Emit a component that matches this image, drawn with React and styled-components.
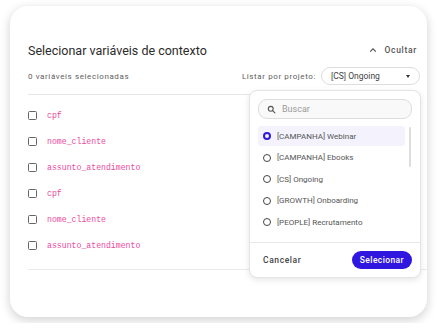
import styled, { createGlobalStyle } from "styled-components";

const GlobalStyle = createGlobalStyle`
  html, body {
    margin: 0;
    padding: 0;
    background: #ffffff;
    font-family: Roboto, "Noto Sans", sans-serif;
  }
`;

const variables = [
  "cpf",
  "nome_cliente",
  "assunto_atendimento",
  "cpf",
  "nome_cliente",
  "assunto_atendimento",
];

const projects = [
  "[CAMPANHA] Webinar",
  "[CAMPANHA] Ebooks",
  "[CS] Ongoing",
  "[GROWTH] Onboarding",
  "[PEOPLE] Recrutamento",
];

const SearchIcon = () => (
  <svg width="9" height="9" viewBox="0 0 24 24" fill="none" stroke="#555" strokeWidth="3" strokeLinecap="round">
    <circle cx="10" cy="10" r="6.5" />
    <line x1="15" y1="15" x2="21" y2="21" />
  </svg>
);

const ChevronUp = () => (
  <svg width="8" height="6" viewBox="0 0 10 6" fill="none" stroke="#555" strokeWidth="1.5">
    <polyline points="1.5,5 5,1.5 8.5,5" />
  </svg>
);

const App = () => {
  return (
    <>
      <GlobalStyle />
      <Page>
        <Card>
          <Header>
            <Title>Selecionar variáveis de contexto</Title>
            <HideButton>
              <ChevronUp />
              Ocultar
            </HideButton>
          </Header>
          <SubRow>
            <Muted>0 variáveis selecionadas</Muted>
            <Filter>
              <Muted>Listar por projeto:</Muted>
              <Select>
                [CS] Ongoing
                <Caret />
              </Select>
            </Filter>
          </SubRow>
          <List>
            {variables.map((v, i) => (
              <Row key={i}>
                <Checkbox />
                <VarName>{v}</VarName>
              </Row>
            ))}
          </List>

          <Popover>
            <Search>
              <SearchIcon />
              <span>Buscar</span>
            </Search>
            <Options>
              {projects.map((p, i) => (
                <Option key={p} active={i === 0}>
                  <Radio active={i === 0} />
                  {p}
                </Option>
              ))}
              <Scrollbar />
            </Options>
            <Footer>
              <CancelButton>Cancelar</CancelButton>
              <PrimaryButton>Selecionar</PrimaryButton>
            </Footer>
          </Popover>
        </Card>
      </Page>
    </>
  );
};

export default App;

const Page = styled.div({
  padding: `6px 10px`,
});

const Card = styled.div({
  position: `relative`,
  width: `417px`,
  height: `311px`,
  boxSizing: `border-box`,
  padding: `36px 7px 0 18px`,
  background: `#fff`,
  borderRadius: `18px`,
  boxShadow: `0 3px 10px 1px rgba(0,0,0,0.16)`,
});

const Header = styled.div({
  display: `flex`,
  justifyContent: `space-between`,
  alignItems: `center`,
  height: `16px`,
  paddingRight: `3px`,
});

const Title = styled.h1({
  margin: 0,
  fontSize: `12.5px`,
  fontWeight: 400,
  color: `#2b2b2b`,
});

const HideButton = styled.div({
  display: `flex`,
  alignItems: `center`,
  gap: `7px`,
  fontSize: `8.5px`,
  letterSpacing: `0.7px`,
  color: `#555`,
  fontWeight: 500,
});

const SubRow = styled.div({
  display: `flex`,
  justifyContent: `space-between`,
  alignItems: `center`,
  marginTop: `9px`,
  paddingBottom: `9px`,
  borderBottom: `1px solid #e6e6e6`,
});

const Muted = styled.span({
  fontSize: `8px`,
  letterSpacing: `0.6px`,
  color: `#5e5e5e`,
});

const Filter = styled.div({
  display: `flex`,
  alignItems: `center`,
  gap: `5px`,
});

const Select = styled.div({
  display: `flex`,
  alignItems: `center`,
  justifyContent: `space-between`,
  boxSizing: `border-box`,
  width: `99px`,
  height: `18px`,
  padding: `0 9px`,
  border: `1px solid #ddd`,
  borderRadius: `9px`,
  fontSize: `8.5px`,
  color: `#444`,
});

const Caret = styled.span({
  width: 0,
  height: 0,
  borderLeft: `2.5px solid transparent`,
  borderRight: `2.5px solid transparent`,
  borderTop: `3px solid #333`,
});

const List = styled.div({
  display: `flex`,
  flexDirection: `column`,
  padding: `7px 0 11px`,
  marginRight: `-7px`,
  borderBottom: `1px solid #ebebeb`,
});

const Row = styled.div({
  display: `flex`,
  alignItems: `center`,
  gap: `10px`,
  height: `26px`,
});

const Checkbox = styled.span({
  width: `9px`,
  height: `9px`,
  boxSizing: `border-box`,
  border: `1.5px solid #666`,
  borderRadius: `1.5px`,
});

const VarName = styled.span({
  fontFamily: `"Liberation Mono", monospace`,
  fontSize: `8.2px`,
  color: `#ec4a9e`,
});

const Popover = styled.div({
  position: `absolute`,
  left: `239px`,
  top: `84px`,
  width: `172px`,
  height: `188px`,
  boxSizing: `border-box`,
  display: `flex`,
  flexDirection: `column`,
  background: `#fff`,
  border: `1px solid #e4e4e4`,
  borderRadius: `8px`,
  boxShadow: `0 2px 6px rgba(0,0,0,0.10)`,
});

const Search = styled.div({
  display: `flex`,
  alignItems: `center`,
  gap: `6px`,
  margin: `8px 8px 0`,
  height: `18px`,
  padding: `0 8px`,
  border: `1px solid #ddd`,
  borderRadius: `9px`,
  background: `#f9f9f9`,
  fontSize: `9px`,
  color: `#999`,
});

const Options = styled.div({
  position: `relative`,
  display: `flex`,
  flexDirection: `column`,
  padding: `7px 15px 10px 8px`,
  borderBottom: `1px solid #e8e8e8`,
  gap: `1.5px`,
});

const Option = styled.div(({ active }) => ({
  display: `flex`,
  alignItems: `center`,
  gap: `6px`,
  height: `20px`,
  padding: `0 5px`,
  borderRadius: `3px`,
  background: active ? `#f4f3fd` : `transparent`,
  fontSize: `8px`,
  color: `#555`,
}));

const Radio = styled.span(({ active }) => ({
  width: `8px`,
  height: `8px`,
  boxSizing: `border-box`,
  borderRadius: `50%`,
  border: active ? `2.5px solid #2f17e0` : `1.5px solid #444`,
}));

const Scrollbar = styled.span({
  position: `absolute`,
  right: `9px`,
  top: `8px`,
  width: `2px`,
  height: `40px`,
  borderRadius: `1px`,
  background: `#ddd`,
});

const Footer = styled.div({
  display: `flex`,
  justifyContent: `space-between`,
  alignItems: `center`,
  flex: 1,
  padding: `0 8px 0 13px`,
});

const CancelButton = styled.span({
  fontSize: `8.5px`,
  letterSpacing: `0.6px`,
  fontWeight: 500,
  color: `#444`,
});

const PrimaryButton = styled.button({
  height: `18px`,
  padding: `0 8px`,
  border: `none`,
  borderRadius: `9px`,
  background: `#2f17e0`,
  color: `#fff`,
  fontFamily: `Roboto, sans-serif`,
  fontSize: `8.5px`,
  fontWeight: 500,
  letterSpacing: `0.4px`,
});
